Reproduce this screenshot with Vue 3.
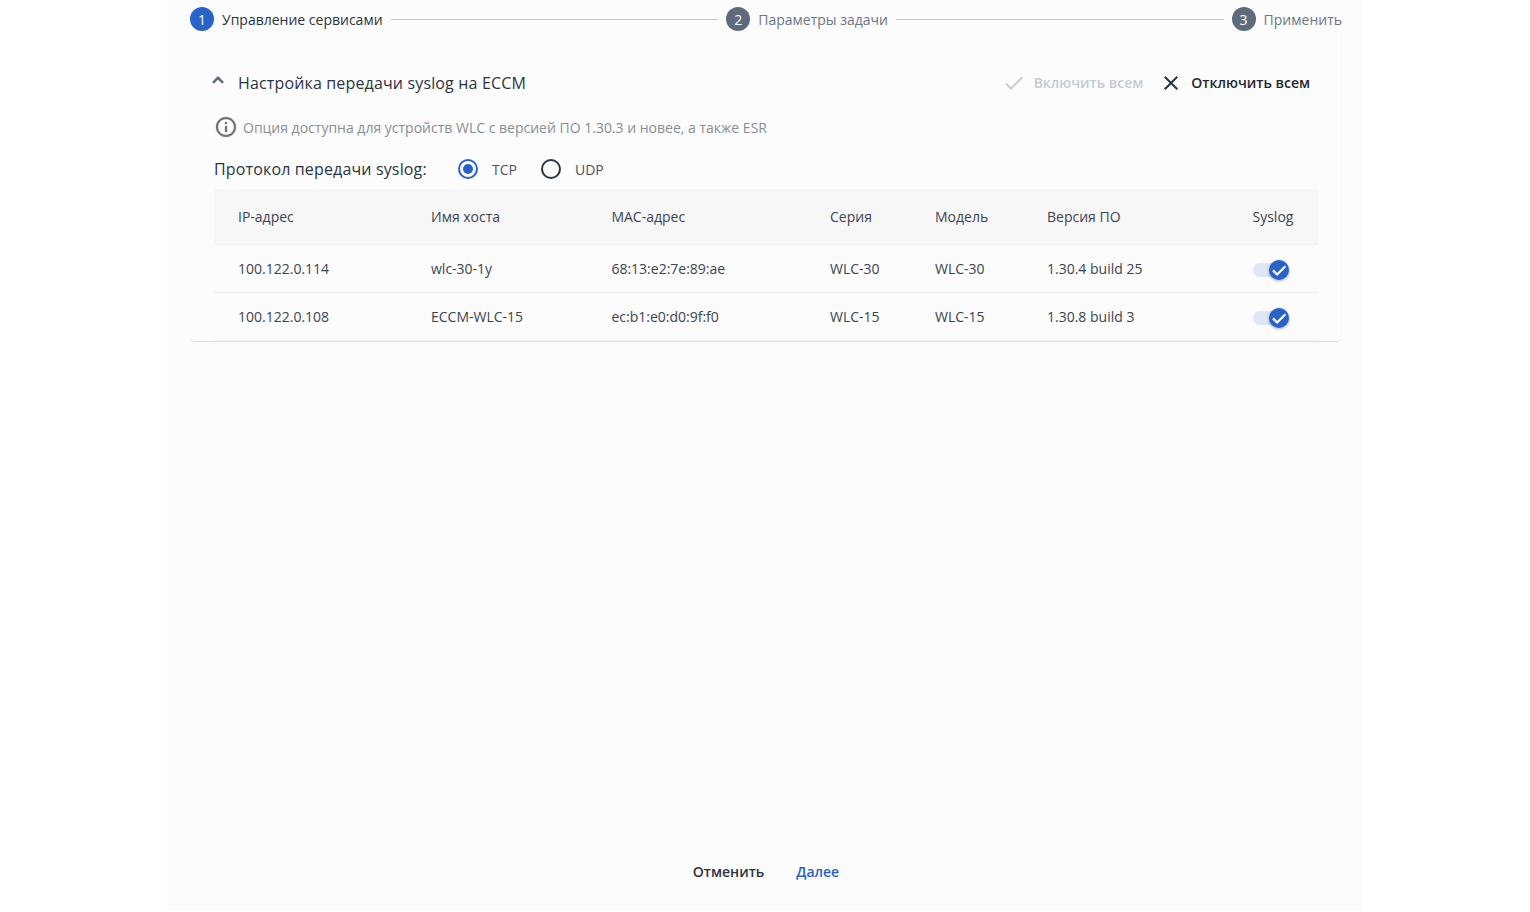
<script setup>
const rows = [
  { ip: '100.122.0.114', host: 'wlc-30-1y', mac: '68:13:e2:7e:89:ae', series: 'WLC-30', model: 'WLC-30', ver: '1.30.4 build 25' },
  { ip: '100.122.0.108', host: 'ECCM-WLC-15', mac: 'ec:b1:e0:d0:9f:f0', series: 'WLC-15', model: 'WLC-15', ver: '1.30.8 build 3' },
]
</script>

<template>
  <div class="page">
    <main class="dialog">
      <nav class="stepper">
        <div class="step active"><span class="num">1</span><span class="lbl">Управление сервисами</span></div>
        <div class="line"></div>
        <div class="step"><span class="num">2</span><span class="lbl">Параметры задачи</span></div>
        <div class="line"></div>
        <div class="step"><span class="num">3</span><span class="lbl">Применить</span></div>
      </nav>

      <section class="panel">
        <header class="panel-head">
          <svg class="chev" width="24" height="24" viewBox="0 0 24 24"><path d="M6.9 14.9 12 9.8l5.1 5.1" fill="none" stroke="#5f6b7c" stroke-width="2.4"/></svg>
          <h2 class="title">Настройка передачи syslog на ECCM</h2>
          <button class="act off">
            <svg width="24" height="24" viewBox="0 0 24 24"><path d="M9 16.17 4.83 12l-1.42 1.41L9 19 21 7l-1.41-1.41z" fill="#c5cad3"/></svg>
            <span>Включить всем</span>
          </button>
          <button class="act">
            <svg width="24" height="24" viewBox="0 0 24 24"><path d="M19 6.41 17.59 5 12 10.59 6.41 5 5 6.41 10.59 12 5 17.59 6.41 19 12 13.41 17.59 19 19 17.59 13.41 12z" fill="#2b3442"/></svg>
            <span>Отключить всем</span>
          </button>
        </header>

        <div class="note">
          <svg width="24" height="24" viewBox="0 0 24 24"><path d="M11 7h2v2h-2zm0 4h2v6h-2zm1-9C6.48 2 2 6.48 2 12s4.48 10 10 10 10-4.48 10-10S17.52 2 12 2zm0 18c-4.41 0-8-3.59-8-8s3.59-8 8-8 8 3.59 8 8-3.59 8-8 8z" fill="#6f747b" stroke="#6f747b" stroke-width=".3"/></svg>
          <span>Опция доступна для устройств WLC с версией ПО 1.30.3 и новее, а также ESR</span>
        </div>

        <div class="proto">
          <span class="proto-lbl">Протокол передачи syslog:</span>
          <label class="radio"><span class="dot on"></span><span>TCP</span></label>
          <label class="radio"><span class="dot"></span><span>UDP</span></label>
        </div>

        <table class="grid">
          <colgroup>
            <col class="c1" /><col class="c2" /><col class="c3" /><col class="c4" /><col class="c5" /><col class="c6" /><col class="c7" />
          </colgroup>
          <thead>
            <tr>
              <th>IP-адрес</th><th>Имя хоста</th><th>MAC-адрес</th><th>Серия</th><th>Модель</th><th>Версия ПО</th><th>Syslog</th>
            </tr>
          </thead>
          <tbody>
            <tr v-for="r in rows" :key="r.ip">
              <td>{{ r.ip }}</td><td>{{ r.host }}</td><td>{{ r.mac }}</td><td>{{ r.series }}</td><td>{{ r.model }}</td><td>{{ r.ver }}</td>
              <td>
                <span class="toggle">
                  <span class="knob">
                    <svg width="18" height="18" viewBox="0 0 24 24"><path d="M4 12.5l5.5 5.5L20.5 7" fill="none" stroke="#fff" stroke-width="3"/></svg>
                  </span>
                </span>
              </td>
            </tr>
          </tbody>
        </table>
      </section>

      <footer class="foot">
        <button class="btn">Отменить</button>
        <button class="btn primary">Далее</button>
      </footer>
    </main>
  </div>
</template>

<style>
html, body { margin: 0; background: #fff; }
</style>

<style scoped>
.page {
  height: 912px;
  overflow: hidden;
  font-family: "Open Sans", sans-serif;
  color: #2b3442;
}
.dialog {
  width: 1196px;
  height: 911px;
  margin: 0 auto;
  background: #fcfcfc;
  display: flex;
  flex-direction: column;
  box-sizing: border-box;
}
.stepper {
  display: flex;
  align-items: center;
  height: 24px;
  margin-top: 7px;
  padding: 0 21px 0 23px;
}
.step { display: flex; align-items: center; gap: 8px; font-size: 14px; white-space: nowrap; }
.num {
  width: 24px; height: 24px; border-radius: 50%;
  background: #5f6b7c; color: #fff; font-size: 14px;
  display: flex; align-items: center; justify-content: center;
}
.active .num { background: #2962c9; }
.lbl { color: #6b7688; }
.active .lbl { color: #2b3442; }
.line { flex: 1; height: 1px; background: #c5c8d0; margin: 0 8px; }

.panel {
  margin: 0 22px 0 24px;
  padding: 0 23px 0;
  border-radius: 0 0 4px 4px;
  box-shadow: 0 1px 1px rgba(0,0,0,.12);
}
.panel-head {
  display: flex;
  align-items: center;
  height: 32px;
  margin-top: 36px;
}
.chev { margin-left: -8px; margin-top: -7px; flex: none; }
.title {
  margin: 0 0 0 8px;
  font-size: 16px;
  font-weight: 500;
  letter-spacing: .15px;
  flex: 1;
  color: #2b3442;
}
.act {
  display: flex; align-items: center; gap: 8px;
  border: 0; background: none; padding: 0;
  font: 600 14px "Open Sans", sans-serif;
  color: #1f2733;
  margin-right: 8px;
}
.act span { margin-top: -2px; }
.act.off { color: #c5cad3; margin-right: 16px; }
.note {
  display: flex; align-items: center; gap: 5px;
  height: 24px;
  margin-top: 16px;
  font-size: 14px;
  color: #8a8d92;
}
.proto {
  display: flex; align-items: center;
  height: 24px;
  margin-top: 18px;
}
.proto-lbl { font-size: 16px; font-weight: 500; letter-spacing: .15px; width: 244px; color: #2b3442; }
.radio { display: flex; align-items: center; gap: 14px; font-size: 14px; width: 83px; color: #4a5361; }
.dot {
  width: 20px; height: 20px; border-radius: 50%;
  border: 2px solid #2b3442; box-sizing: border-box; position: relative;
}
.dot.on { border-color: #2962c9; }
.dot.on::after {
  content: ""; position: absolute; inset: 3px; border-radius: 50%; background: #2962c9;
}
.grid {
  width: 1104px;
  table-layout: fixed;
  border-collapse: collapse;
  margin-top: 8px;
  font-size: 14px;
}
.c1 { width: 193px; } .c2 { width: 180px; } .c3 { width: 219px; } .c4 { width: 105px; }
.c5 { width: 112px; } .c6 { width: 205px; } .c7 { width: 90px; }
th, td { padding: 0 0 0 24px; text-align: left; font-weight: 400; color: #3b4452; }
th:nth-child(3), td:nth-child(3) { padding-left: 24.4px; }
th:nth-child(7), td:nth-child(7) { padding-left: 24.5px; }
th { height: 55px; background: #f7f7f7; border-bottom: 1px solid #eceef0; }
td { height: 47px; border-bottom: 1px solid #eceef0; }
.toggle {
  display: block;
  position: relative;
  top: 1px;
  width: 34px; height: 14px;
  margin-left: .5px;
  border-radius: 7px;
  background: #dfe6f5;
}
.knob {
  position: absolute; left: 16px; top: -3px;
  width: 20px; height: 20px; border-radius: 50%;
  background: #2962c9;
  display: flex; align-items: center; justify-content: center;
  box-shadow: 0 1px 3px rgba(0,0,0,.35);
}
.foot {
  margin-top: auto;
  display: flex;
  justify-content: center;
  gap: 32px;
  padding: 0 0 30px 2px;
}
.btn {
  border: 0; background: none; padding: 0;
  font: 600 14px "Open Sans", sans-serif;
  color: #2b3442;
}
.btn.primary { color: #2962c9; }
</style>
